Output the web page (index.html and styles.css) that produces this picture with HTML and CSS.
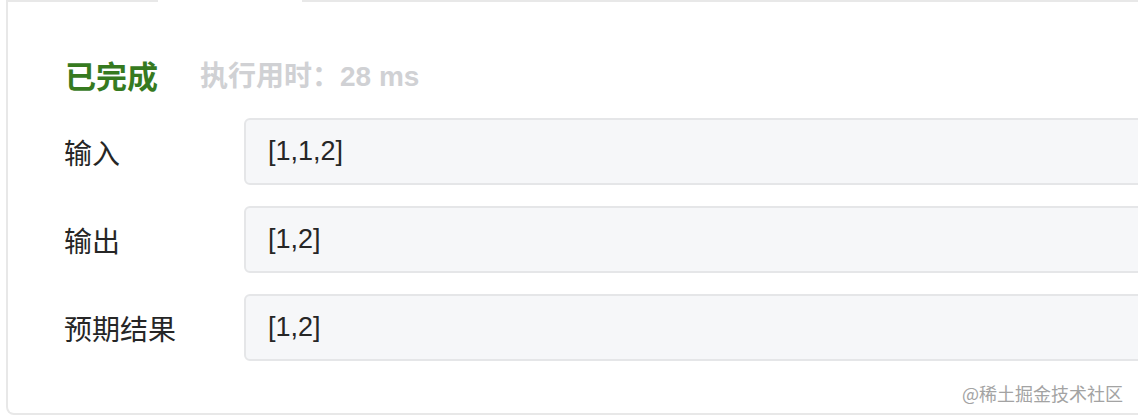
FILE: index.html
```html
<!DOCTYPE html>
<html lang="zh-CN">
<head>
<meta charset="UTF-8">
<meta name="viewport" content="width=device-width, initial-scale=1.0">
<title>执行结果</title>
<link rel="stylesheet" href="styles.css">
</head>
<body>
<div class="panel">
    <div class="tabs">
        <div class="tab"></div>
        <div class="tab active"></div>
        <div class="tab"></div>
        <div class="tab rest"></div>
    </div>
    <div class="result-head">
        <span class="status">已完成</span>
        <span class="runtime">执行用时：28 ms</span>
    </div>
    <div class="rows">
        <div class="row">
            <div class="row-label">输入</div>
            <div class="row-value">[1,1,2]</div>
        </div>
        <div class="row">
            <div class="row-label">输出</div>
            <div class="row-value">[1,2]</div>
        </div>
        <div class="row">
            <div class="row-label">预期结果</div>
            <div class="row-value">[1,2]</div>
        </div>
    </div>
</div>
<div class="watermark">@稀土掘金技术社区</div>
</body>
</html>
```

FILE: styles.css
```css
body {
    margin: 0;
    background: #fff;
    overflow: hidden;
    font-family: "Liberation Sans", "Noto Sans CJK SC", sans-serif;
    color: #262626;
}

.panel {
    margin-left: 6px;
    width: 1200px;
    height: 415px;
    box-sizing: border-box;
    border: 2px solid #e8e8e8;
    border-top: none;
    border-radius: 0 0 8px 8px;
    padding: 0 0 0 56px;
}

.tabs {
    display: flex;
    margin-left: -58px;
    margin-right: -2px;
}

.tab {
    width: 150px;
    height: 2px;
    background: #e8e8e8;
}

.tab:first-child {
    width: 152px;
}

.tab.active {
    width: 144px;
    background: #fff;
}

.tab.rest {
    flex: 1;
}

.result-head {
    display: flex;
    align-items: center;
    height: 40px;
    margin-top: 52px;
}

.status {
    font-family: "Noto Sans CJK SC", sans-serif;
    font-size: 31px;
    font-weight: 700;
    color: #367a1f;
    margin-left: 1px;
}

.runtime {
    font-size: 28px;
    font-weight: 700;
    color: #d0d1d4;
    margin-left: 42px;
}

.rows {
    display: flex;
    flex-direction: column;
    gap: 21px;
    margin-top: 24px;
}

.row {
    display: flex;
    align-items: center;
}

.row-label {
    width: 180px;
    font-family: "Noto Sans CJK SC", sans-serif;
    font-size: 28px;
}

.row-value {
    flex: 1;
    height: 67px;
    box-sizing: border-box;
    display: flex;
    align-items: center;
    padding-left: 22px;
    background: #f6f7f9;
    border: 2px solid #e5e6e8;
    border-radius: 6px;
    font-size: 27px;
}

.watermark {
    position: absolute;
    top: 380px;
    right: 15px;
    font-family: "Noto Sans CJK SC", sans-serif;
    font-size: 18px;
    color: #a3a3a3;
}
```
